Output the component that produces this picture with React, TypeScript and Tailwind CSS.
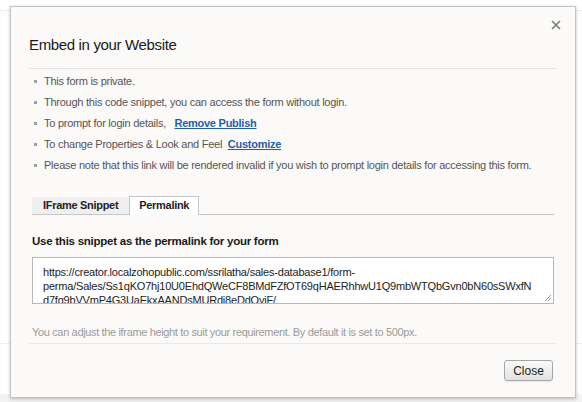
import React from 'react';

const font = { fontFamily: '"Liberation Sans", Arial, Helvetica, sans-serif' };

const permalinkLines = [
  'https://creator.localzohopublic.com/ssrilatha/sales-database1/form-',
  'perma/Sales/Ss1qKO7hj10U0EhdQWeCF8BMdFZfOT69qHAERhhwU1Q9mbWTQbGvn0bN60sSWxfN',
  'd7fg9bVVmP4G3UaEkxAANDsMURdi8eDdQyiF/',
];

function Bullet({ children }: { children: React.ReactNode }) {
  return (
    <li className="flex items-center h-[21px]">
      <span className="w-[3px] h-[3px] bg-[#a0a0a0] mr-[7px] shrink-0" />
      <span className="text-[11px] tracking-[-0.25px] text-[#555] whitespace-nowrap">{children}</span>
    </li>
  );
}

function Link({ children }: { children: React.ReactNode }) {
  return <a className="font-bold text-[#1f5fae] underline cursor-pointer">{children}</a>;
}

export default function App() {
  return (
    <div className="w-[582px] h-[402px] bg-white overflow-hidden relative" style={font}>
      {/* page behind the modal */}
      <div className="absolute left-0 right-0 top-[10px] h-px bg-[#ececec]" />
      <div className="absolute left-0 right-0 top-[343px] h-px bg-[#f0f0f0]" />
      <div className="absolute left-0 right-0 bottom-0 h-[8px] bg-[#f3f3f3]" />

      <div className="absolute left-[10px] top-[6px] w-[566px] h-[392px] bg-[#fbfaf8] border border-[#c4c4c4] shadow-[0_1px_3px_rgba(0,0,0,0.25)] px-[18px] flex flex-col">
        <button className="absolute right-[13px] top-[12px] w-[12px] h-[12px] flex items-center justify-center">
          <svg width="10" height="10" viewBox="0 0 10 10">
            <path d="M1 1 L9 9 M9 1 L1 9" stroke="#7a7a7a" strokeWidth="1.6" />
          </svg>
        </button>

        <h2 className="pt-[28px] text-[15px] tracking-[-0.35px] leading-[20px] text-[#1a1a1a] pb-[13px] border-b border-[#e6e4e1]">
          Embed in your Website
        </h2>

        <ul className="pt-[2px] pl-[5px]">
          <Bullet>This form is private.</Bullet>
          <Bullet>Through this code snippet, you can access the form without login.</Bullet>
          <Bullet>
            To prompt for login details,&nbsp;&nbsp; <Link>Remove Publish</Link>
          </Bullet>
          <Bullet>
            To change Properties &amp; Look and Feel&nbsp; <Link>Customize</Link>
          </Bullet>
          <Bullet>
            Please note that this link will be rendered invalid if you wish to prompt login details for accessing this form.
          </Bullet>
        </ul>

        <div className="mx-[3px] mt-[20px] flex items-end border-b border-[#c6c6c6] h-[19px]">
          <div className="h-[17px] px-[11px] bg-[#efefef] text-[11px] tracking-[-0.3px] font-bold text-[#222] flex items-center">
            IFrame Snippet
          </div>
          <div className="h-[19px] px-[9px] bg-white border border-b-0 border-[#c6c6c6] text-[11px] tracking-[-0.3px] font-bold text-[#222] flex items-center -mb-px pb-px">
            Permalink
          </div>
        </div>

        <div className="mx-[3px] mt-[19px] text-[11.5px] tracking-[-0.25px] font-bold text-[#1a1a1a] leading-[15px]">
          Use this snippet as the permalink for your form
        </div>

        <div className="mx-[3px] mt-[8px] h-[47px] bg-white border border-[#b8b8b8] relative overflow-hidden">
          <div className="pl-[10px] pt-[7px] text-[11px] tracking-[-0.2px] leading-[14px] text-[#222]">
            {permalinkLines.map((line) => (
              <div key={line} className="whitespace-nowrap">
                {line}
              </div>
            ))}
          </div>
          <svg className="absolute right-[1px] bottom-[1px]" width="8" height="8" viewBox="0 0 8 8">
            <path d="M7 1 L1 7 M7 4 L4 7" stroke="#999" strokeWidth="1" />
          </svg>
        </div>

        <div className="mx-[3px] mt-[21px] text-[11px] tracking-[-0.35px] text-[#9a9a9a] leading-[14px]">
          You can adjust the iframe height to suit your requirement. By default it is set to 500px.
        </div>
        <div className="mt-[4px] h-px bg-[#ebe9e6]" />

        <div className="flex justify-end pt-[16px] pr-[4px]">
          <button className="w-[49px] h-[21px] rounded-[3px] border border-[#a6a6a6] bg-gradient-to-b from-[#fbfbfb] to-[#e2e2e2] text-[12px] text-[#222] shadow-[0_1px_1px_rgba(0,0,0,0.08)]">
            Close
          </button>
        </div>
      </div>
    </div>
  );
}
